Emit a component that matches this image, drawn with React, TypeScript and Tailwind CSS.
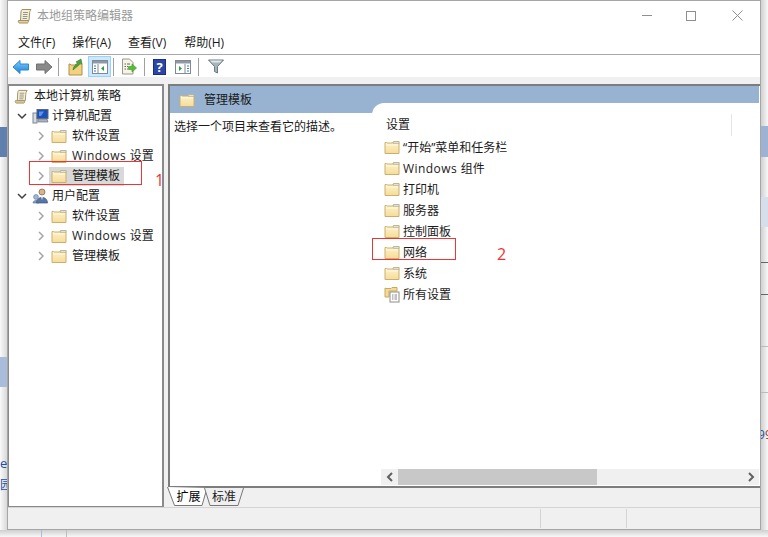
import React from 'react';

const FONT = { fontFamily: '"Open Sans","Noto Sans CJK SC",sans-serif' };

function Folder({ className = '' }: { className?: string }) {
  return (
    <svg width="16" height="15" viewBox="0 0 16 15" className={`shrink-0 ${className}`}>
      <defs>
        <linearGradient id="fold" x1="0" y1="0" x2="0" y2="1">
          <stop offset="0" stopColor="#fdf3cf" />
          <stop offset="1" stopColor="#f7dc97" />
        </linearGradient>
      </defs>
      <path d="M1 2.5 L1 13.5 L15 13.5 L15 1.5 L9.5 1.5 L8.5 3 L3 3 L2.5 2.5 Z" fill="url(#fold)" stroke="#c9b06e" strokeWidth="1" />
      <path d="M10 1.5 L15 1.5 L15 3.5 L9 3.5 Z" fill="#d6e4ec" stroke="#b9a878" strokeWidth="0.6" />
      <path d="M2 5 L14 5" stroke="#fff8e0" strokeWidth="1" />
    </svg>
  );
}

function Scroll({ size = 16 }: { size?: number }) {
  return (
    <svg width={size} height={size} viewBox="0 0 16 16" className="shrink-0">
      <path d="M5 1.5 L14 1.5 C13 3 12.5 4 12.5 6 L12 12.5 L3.5 12.5 L4 4 C4 3 4.5 2 5 1.5 Z" fill="#f6efd8" stroke="#a08f63" />
      <path d="M1.5 12.5 L11 12.5 C11.5 13.5 11.5 14.5 10.5 15 L2.5 15 C1.5 15 1 13.5 1.5 12.5 Z" fill="#e6d39b" stroke="#a08f63" />
      <path d="M6 4.5 H11 M6 6.5 H10.5 M5.8 8.5 H10.5 M5.6 10.5 H10" stroke="#8a8a80" strokeWidth="0.9" />
    </svg>
  );
}

function Computer() {
  return (
    <svg width="17" height="16" viewBox="0 0 17 16" className="shrink-0">
      <rect x="1" y="5" width="4" height="10" fill="#d7dbe2" stroke="#7b8494" />
      <rect x="5" y="1.5" width="11" height="9" fill="#1d4fb8" stroke="#5d6778" />
      <path d="M7 3.5 L12 3.5 L9 8 L7 8 Z" fill="#5d92ea" />
      <path d="M6 11 H15 L16 14 H6 Z" fill="#aab1bd" stroke="#6d7685" strokeWidth="0.7" />
    </svg>
  );
}

function User() {
  return (
    <svg width="17" height="16" viewBox="0 0 17 16" className="shrink-0">
      <circle cx="4" cy="9" r="2.4" fill="#9fb7d8" stroke="#6a7f9f" strokeWidth="0.7" />
      <path d="M1 15 C1 11.5 7 11.5 7 15 Z" fill="#7f9fcb" stroke="#5a7199" strokeWidth="0.6" />
      <circle cx="10" cy="4" r="3" fill="#d8b48c" stroke="#7a6148" strokeWidth="0.7" />
      <path d="M4.5 15 C4.5 7.5 15.5 7.5 15.5 15 Z" fill="#5577a8" stroke="#3e5478" strokeWidth="0.7" />
      <path d="M9 8.5 L11 8.5 L10 12 Z" fill="#f2f2f2" />
    </svg>
  );
}

function Chevron({ open }: { open?: boolean }) {
  return open ? (
    <svg width="10" height="10" viewBox="0 0 10 10" className="shrink-0">
      <path d="M1 3 L5 7 L9 3" fill="none" stroke="#404040" strokeWidth="1.5" />
    </svg>
  ) : (
    <svg width="10" height="10" viewBox="0 0 10 10" className="shrink-0">
      <path d="M3 1 L7 5 L3 9" fill="none" stroke="#a6a6a6" strokeWidth="1.5" />
    </svg>
  );
}

function Win() {
  return <span className="tracking-[0.45px]">Windows </span>;
}

function ToolSep() {
  return <div className="w-px h-[18px] bg-[#a0a0a0] shrink-0" />;
}

function BackIcon() {
  return (
    <svg width="18" height="16" viewBox="0 0 18 16">
      <defs>
        <linearGradient id="bk" x1="0" y1="0" x2="0" y2="1">
          <stop offset="0" stopColor="#7fd0fb" />
          <stop offset="1" stopColor="#1a7fd8" />
        </linearGradient>
      </defs>
      <path d="M1 8 L8 1.5 L8 5 L16.5 5 L16.5 11 L8 11 L8 14.5 Z" fill="url(#bk)" stroke="#2f86cf" />
    </svg>
  );
}

function ForwardIcon() {
  return (
    <svg width="18" height="16" viewBox="0 0 18 16">
      <path d="M17 8 L10 1.5 L10 5 L1.5 5 L1.5 11 L10 11 L10 14.5 Z" fill="#8a8a8a" stroke="#707070" />
    </svg>
  );
}

function UpIcon() {
  return (
    <svg width="16" height="18" viewBox="0 0 16 18">
      <path d="M1 6 L1 17 L14 17 L14 6 L8 6 L7 7 L3 7 L2 6 Z" fill="#f2d27f" stroke="#b08f45" />
      <path d="M5 12 C5 8 8 7 10 5 L8 4 L13 1 L14 6 L12 5 C11 8 8 9 5 12 Z" fill="#4aa63c" stroke="#2f7a28" strokeWidth="0.6" />
    </svg>
  );
}

function PaneIcon({ variant }: { variant: 'tree' | 'action' }) {
  return (
    <svg width="16" height="14" viewBox="0 0 16 14">
      <rect x="0.5" y="0.5" width="15" height="13" fill="#fff" stroke="#7f8a96" />
      <rect x="1" y="1" width="14" height="2.5" fill="#8f99a5" />
      {variant === 'tree' ? (
        <>
          <path d="M6 4 V13" stroke="#7f8a96" />
          <path d="M2 6 H4 M2 8.5 H4 M2 11 H4" stroke="#3b78c4" strokeWidth="1.2" />
          <path d="M12 6 L9 8.5 L12 11 Z" fill="#2f9e3a" />
        </>
      ) : (
        <>
          <path d="M10 4 V13" stroke="#7f8a96" />
          <path d="M12 6 H14 M12 8.5 H14 M12 11 H14" stroke="#3b78c4" strokeWidth="1.2" />
          <path d="M4 6 L7 8.5 L4 11 Z" fill="#2f9e3a" />
        </>
      )}
    </svg>
  );
}

function ExportIcon() {
  return (
    <svg width="17" height="17" viewBox="0 0 17 17">
      <path d="M2.5 1 L9.5 1 L13 4.5 L13 16 L2.5 16 Z" fill="#f7f3e6" stroke="#9c9684" />
      <path d="M4.5 6 H6 M7 6 H10 M4.5 8.5 H6 M7 8.5 H8 M4.5 11 H6 M7 11 H8" stroke="#555" strokeWidth="0.9" />
      <path d="M8.5 8.5 H12 V6 L16.5 10 L12 14 V11.5 H8.5 Z" fill="#55bf3a" stroke="#3b9227" strokeWidth="0.6" />
    </svg>
  );
}

function HelpIcon() {
  return (
    <div className="w-[13px] h-[16px] bg-[#2a46a8] border border-[#1d2f78] text-white text-[13px] font-bold leading-[15px] text-center">
      ?
    </div>
  );
}

function FilterIcon() {
  return (
    <svg width="16" height="15" viewBox="0 0 16 15">
      <path d="M0.5 1 H15.5 L9.5 7.5 V14 L6.5 12.5 V7.5 Z" fill="#a5b4bd" stroke="#6b7a84" />
      <path d="M2 1.5 H14 L12 3.5 H4 Z" fill="#dfe7ec" />
    </svg>
  );
}

const settings = ['“开始”菜单和任务栏', 'Windows 组件', '打印机', '服务器', '控制面板', '网络', '系统'];

function TreeChild({ label, selected }: { label: React.ReactNode; selected?: boolean }) {
  return (
    <div className="h-5 flex items-center pl-[27px]">
      <Chevron />
      <div className={`flex items-center h-[19px] ml-[3px] pl-[2px] w-[75px] ${selected ? 'bg-[#d9d9d9]' : ''}`}>
        <Folder />
        <span className="ml-[5px] whitespace-nowrap">{label}</span>
      </div>
    </div>
  );
}

export default function App() {
  return (
    <div className="relative w-[768px] h-[537px] overflow-hidden bg-white text-[12px] text-[#1a1a1a]" style={FONT}>
      <div className="flex h-[530px]">
        {/* what shows behind the window on the left */}
        <div className="w-[7px] shrink-0 flex flex-col bg-gradient-to-r from-[#fafafa] to-[#d8d8d8] text-[#1c4fa8] overflow-hidden">
          <div className="h-[127px]" />
          <div className="h-[30px] bg-[#5f7fae]" />
          <div className="h-[200px]" />
          <div className="h-[30px] bg-[#a9bcdb]" />
          <div className="h-[66px]" />
          <div className="h-[20px] leading-[20px] text-[13px]">e</div>
          <div className="h-[4px]" />
          <div className="h-[16px] leading-[16px] text-[12px]">园</div>
        </div>

        <div className="w-[754px] shrink-0 flex flex-col border border-[#a6a6a6] bg-white">
          {/* title bar */}
          <div className="h-[30px] shrink-0 flex items-center pl-[9px] pr-[17px] pb-[1px]">
            <Scroll />
            <span className="ml-[4px] text-[#9a9a9a]">本地组策略编辑器</span>
            <div className="ml-auto flex items-center">
              <div className="w-[10px] h-px bg-[#8f8f8f]" />
              <div className="ml-[34px] w-[10px] h-[10px] border border-[#8f8f8f]" />
              <svg width="11" height="11" viewBox="0 0 11 11" className="ml-[36px]">
                <path d="M0.5 0.5 L10.5 10.5 M10.5 0.5 L0.5 10.5" stroke="#8f8f8f" strokeWidth="1" />
              </svg>
            </div>
          </div>
          {/* menu bar */}
          <div className="h-[24px] shrink-0 flex items-center pl-[10px] gap-[17px] border-b border-[#a9a9a9]">
            <span>文件(F)</span>
            <span>操作(A)</span>
            <span>查看(V)</span>
            <span className="ml-[1px]">帮助(H)</span>
          </div>
          {/* toolbar */}
          <div className="h-[22px] shrink-0 flex items-center pl-[4px] pt-[1px]">
            <div className="w-[18px] flex justify-center"><BackIcon /></div>
            <div className="w-[18px] flex justify-center ml-[5px]"><ForwardIcon /></div>
            <div className="ml-[5px]"><ToolSep /></div>
            <div className="ml-[9px]"><UpIcon /></div>
            <div className="ml-[4px] w-[23px] h-[21px] flex items-center justify-center bg-[#cce8ff] border border-[#99d1ff]">
              <PaneIcon variant="tree" />
            </div>
            <div className="ml-[2px]"><ToolSep /></div>
            <div className="ml-[6px]"><ExportIcon /></div>
            <div className="ml-[7px]"><ToolSep /></div>
            <div className="ml-[8px]"><HelpIcon /></div>
            <div className="ml-[9px]"><PaneIcon variant="action" /></div>
            <div className="ml-[7px]"><ToolSep /></div>
            <div className="ml-[9px]"><FilterIcon /></div>
          </div>

          {/* panes */}
          <div className="flex-1 min-h-0 flex bg-[#f0f0f0] pt-[7px] gap-[4px]">
            <div className="w-[156px] shrink-0 bg-white border-l border-t-2 border-r-2 border-b border-[#8a8a8a]">
              <div className="h-5 flex items-center pl-[5px]">
                <Scroll size={15} />
                <span className="ml-[5px] whitespace-nowrap">本地计算机 策略</span>
              </div>
              <div className="h-5 flex items-center pl-[8px]">
                <Chevron open />
                <span className="ml-[5px]"><Computer /></span>
                <span className="ml-[3px]">计算机配置</span>
              </div>
              <TreeChild label="软件设置" />
              <TreeChild label={<><Win />设置</>} />
              <TreeChild label="管理模板" selected />
              <div className="h-5 flex items-center pl-[8px]">
                <Chevron open />
                <span className="ml-[5px]"><User /></span>
                <span className="ml-[3px]">用户配置</span>
              </div>
              <TreeChild label="软件设置" />
              <TreeChild label={<><Win />设置</>} />
              <TreeChild label="管理模板" />
            </div>

            <div className="flex-1 min-w-0 flex flex-col">
              <div className="flex-1 min-h-0 flex flex-col border-l-2 border-t-2 border-[#7d7d7d] border-b-2 bg-white pr-[1px]">
                <div className="h-[27px] shrink-0 bg-[#98b3d1] flex items-center pl-[9px] pt-[1px]">
                  <Folder />
                  <span className="ml-[9px]">管理模板</span>
                </div>
                <div className="flex-1 min-h-0 flex">
                  <div className="w-[202px] shrink-0 pl-[4px] pt-[5px] whitespace-nowrap">选择一个项目来查看它的描述。</div>
                  <div className="flex-1 min-w-0 -mt-[10px] bg-white rounded-tl-[12px] flex flex-col pl-[9px]">
                    <div className="h-[33px] shrink-0 flex items-end relative">
                      <span className="pl-[5px] pb-[2px]">设置</span>
                      <div className="ml-auto mr-[27px] w-px h-[22px] bg-[#e5e5e5]" />
                    </div>
                    <div className="flex-1 min-h-0 pt-[1px]">
                      {settings.map((s) => (
                        <div key={s} className="h-[21px] flex items-center pl-[3px]">
                          <Folder />
                          <span className="ml-[3px] whitespace-nowrap">{s.startsWith('Windows') ? <><Win />组件</> : s}</span>
                        </div>
                      ))}
                      <div className="h-[21px] flex items-center pl-[3px]">
                        <svg width="16" height="17" viewBox="0 0 16 17" className="shrink-0">
                          <path d="M1 2 L1 11 L5 11 L5 5 L13 5 L13 1.5 L8 1.5 L7 2.5 L2 2.5 Z" fill="#f5da93" stroke="#c9a95f" />
                          <rect x="6" y="6" width="9" height="10" fill="#fff" stroke="#8c8c8c" />
                          <path d="M8 9 H9.5 M10.5 9 H13 M8 11 H9.5 M10.5 11 H13 M8 13 H9.5 M10.5 13 H13" stroke="#777" strokeWidth="0.9" />
                        </svg>
                        <span className="ml-[3px]">所有设置</span>
                      </div>
                    </div>
                    {/* horizontal scrollbar */}
                    <div className="h-[16px] shrink-0 bg-[#f0f0f0] flex items-center">
                      <div className="w-[17px] flex justify-center">
                        <svg width="8" height="10" viewBox="0 0 8 10"><path d="M6 1 L2 5 L6 9" fill="none" stroke="#606060" strokeWidth="2" /></svg>
                      </div>
                      <div className="w-[199px] h-[16px] bg-[#c8c8c8]" />
                      <div className="ml-auto w-[17px] flex justify-center">
                        <svg width="8" height="10" viewBox="0 0 8 10"><path d="M2 1 L6 5 L2 9" fill="none" stroke="#606060" strokeWidth="2" /></svg>
                      </div>
                    </div>
                    <div className="h-[1px] shrink-0" />
                  </div>
                </div>
              </div>
              {/* tabs */}
              <div className="h-[20px] shrink-0 flex -mt-[1px]">
                <div className="relative w-[40px] h-[20px] flex items-center justify-center ml-[-1px]">
                  <svg width="40" height="20" viewBox="0 0 40 20" className="absolute inset-0">
                    <path d="M0.5 0 L7.5 18.5 L35 18.5 L40 1" fill="#fff" stroke="#777" />
                  </svg>
                  <span className="relative pl-[3px] text-black">扩展</span>
                </div>
                <div className="relative w-[40px] h-[20px] flex items-center justify-center -ml-[3px]">
                  <svg width="40" height="20" viewBox="0 0 40 20" className="absolute inset-0">
                    <path d="M0.5 1 L6 18.5 L34 18.5 L39.5 1" fill="#f0f0f0" stroke="#777" />
                  </svg>
                  <span className="relative">标准</span>
                </div>
              </div>
            </div>
          </div>

          {/* status bar */}
          <div className="h-[22px] shrink-0 bg-[#f0f0f0] border-t border-[#d4d4d4] flex items-center">
            <div className="ml-[532px] w-px h-[19px] bg-[#d4d4d4]" />
            <div className="ml-[85px] w-px h-[19px] bg-[#d4d4d4]" />
          </div>
        </div>

        {/* what shows behind the window on the right */}
        <div className="flex-1 min-w-0 flex flex-col bg-gradient-to-r from-[#d0d0d0] to-[#f8f8f8] overflow-hidden">
          <div className="h-[126px]" />
          <div className="h-[31px] bg-[#9eb3d3]" />
          <div className="h-[40px]" />
          <div className="h-[30px] bg-[#d5deea]" />
          <div className="h-[35px]" />
          <div className="h-px bg-[#666]" />
          <div className="h-[31px]" />
          <div className="h-px bg-[#666]" />
          <div className="h-[51px]" />
          <div className="h-px bg-[#bbb]" />
          <div className="h-[45px]" />
          <div className="h-px bg-[#bbb]" />
          <div className="h-[34px]" />
          <div className="-ml-[3px] text-[12px] leading-[16px] text-[#1c4fa8] whitespace-nowrap">9<span className="text-[#a33]">9</span></div>
        </div>
      </div>
      <div className="h-[7px] flex bg-gradient-to-b from-[#cfcfcf] to-[#f8f8f8]">
        <div className="ml-[41px] w-px bg-[#a9bcdb]" />
        <div className="ml-[24px] w-px bg-[#bdbdbd]" />
      </div>

      {/* red annotations */}
      <div className="absolute left-[29px] top-[161px] w-[113px] h-[24px] border border-[#ee3535]" />
      <span className="absolute left-[155px] top-[170px] text-[16px] leading-[20px] text-[#ee3535]">1</span>
      <div className="absolute left-[372px] top-[238px] w-[84px] h-[22px] border border-[#ee3535]" />
      <span className="absolute left-[497px] top-[244px] text-[16px] leading-[20px] text-[#ee3535]">2</span>
    </div>
  );
}
